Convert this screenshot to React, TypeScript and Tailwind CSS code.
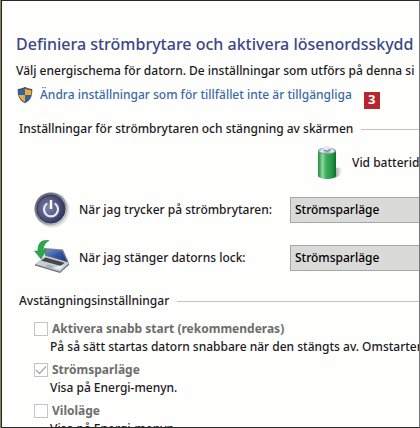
import { useId, type ReactNode } from "react";

const ShieldIcon = () => (
  <svg className="size-[18px] shrink-0" viewBox="0 0 18 18" aria-hidden="true">
    <path
      d="M9 .8c2.200 1.500 4.600 2 7.200 2.200.5 6.400-1.400 11.400-7.200 14.300C3.200 14.400 1.300 9.400 1.800 3 4.400 2.800 6.800 2.300 9 .8z"
      fill="#4b5158"
    />
    <path d="M9 2.400v6.500H2.800c-.2-1.600-.2-3.100-.1-4.700C5 4 7.100 3.500 9 2.400z" fill="#2c65a8" />
    <path d="M9 2.400v6.500h6.200c.2-1.600.2-3.100.1-4.700C13 4 10.900 3.500 9 2.400z" fill="#f0a93a" />
    <path d="M9 8.900v7c-3.700-2-5.500-4.400-6.200-7z" fill="#f0a93a" />
    <path d="M9 8.900v7c3.700-2 5.500-4.400 6.200-7z" fill="#2c65a8" />
  </svg>
);

const BatteryIcon = () => (
  <svg className="h-[36px] w-[28px] shrink-0" viewBox="0 0 28 36" aria-hidden="true">
    <defs>
      <linearGradient id="battery-body">
        <stop offset="0" stopColor="#1d8a3c" />
        <stop offset=".25" stopColor="#8fd6a0" />
        <stop offset=".45" stopColor="#3fae5c" />
        <stop offset=".8" stopColor="#1f9543" />
        <stop offset="1" stopColor="#0d6b2b" />
      </linearGradient>
      <linearGradient id="battery-shadow">
        <stop offset="0" stopColor="#8c8c88" />
        <stop offset="1" stopColor="#fdfdfb" />
      </linearGradient>
    </defs>
    <path d="M18 23c5-1 9 0 8 3-1 4-5 7-9 7z" fill="url(#battery-shadow)" />
    <path d="M2 6v25c1 4 17 4 18 0V6z" fill="url(#battery-body)" />
    <ellipse cx="11" cy="6" rx="8.800" ry="3" fill="#aab4c6" stroke="#5f9b72" strokeWidth=".7" />
    <path d="M3.500 6l4-3V1.800c1-1.200 6-1.200 7 0V3l4 3-3.500 2-4-2-4 2z" fill="#e6eaf2" />
    <path d="M8 4.500l3 1 3-2 1 2.500-4 1-4-1z" fill="#8291ad" />
  </svg>
);

const PowerIcon = () => (
  <svg className="size-[36px] shrink-0" viewBox="0 0 36 36" aria-hidden="true">
    <defs>
      <linearGradient id="power-ring" x2="1" y2="1">
        <stop offset="0" stopColor="#55585e" />
        <stop offset=".5" stopColor="#8d9097" />
        <stop offset="1" stopColor="#d5d6d8" />
      </linearGradient>
      <radialGradient id="power-face" cx=".4" cy=".45" r=".6">
        <stop offset="0" stopColor="#8184a8" />
        <stop offset=".5" stopColor="#5c5f88" />
        <stop offset="1" stopColor="#30345c" />
      </radialGradient>
    </defs>
    <circle cx="18" cy="18" r="17.500" fill="#e3e3e1" />
    <circle cx="17" cy="17" r="16.500" fill="url(#power-ring)" />
    <circle cx="17" cy="17" r="14" fill="url(#power-face)" stroke="#343856" />
    <path
      d="M12.500 12a7 7 0 1 0 9 0"
      fill="none"
      stroke="#e9e9ef"
      strokeWidth="2.200"
      strokeLinecap="round"
    />
    <path d="M17 8v9" stroke="#fff" strokeWidth="2.400" />
  </svg>
);

const LaptopIcon = () => (
  <svg className="size-[36px] shrink-0" viewBox="0 0 36 36" aria-hidden="true">
    <defs>
      <linearGradient id="laptop-screen" x2="1" y2="1">
        <stop offset="0" stopColor="#7592cf" />
        <stop offset=".5" stopColor="#3456a4" />
        <stop offset="1" stopColor="#203775" />
      </linearGradient>
    </defs>
    <path d="M10 8L29 9.500l6 13.500-24-7z" fill="#7b7f86" />
    <path d="M11.500 9.500L28 10.800l5.300 11L12 15z" fill="url(#laptop-screen)" />
    <path d="M11 16l24 7-9 8.500L1 24z" fill="#c9ced2" />
    <path d="M1 24l25 7.500 9-8.500v2l-9 8L1 25.500z" fill="#6d7177" />
    <path d="M11.500 17.500l19 5.300-3.500 3.200-20-5.500z" fill="#44484e" />
    <path d="M14 24.500l6 1.700-3 2-6-1.700z" fill="#9fb0b8" />
    <path d="M24 26.500l6-2-4 5-6-1.500z" fill="#e8f3f5" />
    <path
      d="M15 .5C8-.5 3.500 3 4 11H.500l6.500 8 5.500-9H9.500C9 6 11 3 15 .5z"
      fill="#2ba84a"
      stroke="#1d8438"
      strokeWidth=".5"
    />
  </svg>
);

const SectionTitle = ({ children }: { children: ReactNode }) => (
  <h2 className="flex h-5 items-center gap-2 pl-[3px]">
    {children}
    <span className="h-px flex-1 bg-[#c3c3c1]" />
  </h2>
);

const ActionRow = ({ icon, label }: { icon: ReactNode; label: string }) => {
  const id = useId();

  return (
    <div className="flex h-12 items-center pl-[18px]">
      {icon}
      <label htmlFor={id} className="ml-[9px] w-[211px] shrink-0">
        {label}
      </label>
      <select
        id={id}
        disabled
        className="h-[26px] min-w-[160px] flex-1 appearance-none border border-[#a6a7a5] bg-[#dadbd8] px-1 text-black opacity-100"
      >
        <option>Strömsparläge</option>
      </select>
    </div>
  );
};

const ShutdownOption = ({
  label,
  description,
  checked = false,
}: {
  label: string;
  description: string;
  checked?: boolean;
}) => {
  const id = useId();

  return (
    <div className="h-[41px] pl-[18px]">
      <div className="flex h-5 items-center gap-1">
        <span className="grid size-[14px] shrink-0">
          <input
            id={id}
            type="checkbox"
            disabled
            defaultChecked={checked}
            className="peer col-start-1 row-start-1 size-[14px] appearance-none border border-[#c4c5c3] bg-white"
          />
          <svg
            className="col-start-1 row-start-1 hidden size-[14px] peer-checked:block"
            viewBox="0 0 14 14"
            aria-hidden="true"
          >
            <path d="M2 7l3.500 3.500L12 3.500" fill="none" stroke="#a9aaa8" strokeWidth="1.300" />
          </svg>
        </span>
        <label htmlFor={id} className="font-bold text-[#6c6e6c]">
          {label}
        </label>
      </div>
      <p className="h-4 pl-4 leading-[16px]">{description}</p>
    </div>
  );
};

function App() {
  return (
    <div className="flex h-screen border-l border-[#8c835f] font-['Noto_Sans',sans-serif] text-[12px] font-medium whitespace-nowrap text-[#1c1a1c]">
      <main className="min-w-0 flex-1 overflow-hidden border border-[#2b2728] border-r-[#77777a] bg-[#fefefd] pt-[29px] pl-[14px]">
        <h1 className="h-7 text-[16px] leading-[28px] text-[#3b4787]">
          Definiera strömbrytare och aktivera lösenordsskydd
        </h1>
        <p className="mt-[3px] h-5 leading-[20px]">
          Välj energischema för datorn. De inställningar som utförs på denna si
        </p>
        <div className="mt-[2px] flex h-6 items-center">
          <a href="#unlock" className="flex items-center gap-[6px] text-[#3c69a8]">
            <ShieldIcon />
            Ändra inställningar som för tillfället inte är tillgängliga
          </a>
          <span className="mt-[10px] ml-[12px] flex h-[17px] w-4 items-center justify-center bg-[#b9242f] text-[13px] font-bold text-white">
            3
          </span>
        </div>

        <section className="mt-3">
          <SectionTitle>Inställningar för strömbrytaren och stängning av skärmen</SectionTitle>
          <div className="mt-[6px] mb-[5px] flex h-9 items-center gap-2 pl-[300px]">
            <BatteryIcon />
            <span>Vid batterid</span>
          </div>
          <ActionRow icon={<PowerIcon />} label="När jag trycker på strömbrytaren:" />
          <ActionRow icon={<LaptopIcon />} label="När jag stänger datorns lock:" />
        </section>

        <section className="mt-[9px]">
          <SectionTitle>Avstängningsinställningar</SectionTitle>
          <div className="mt-2">
            <ShutdownOption
              label="Aktivera snabb start (rekommenderas)"
              description="På så sätt startas datorn snabbare när den stängts av. Omstarter"
            />
            <ShutdownOption label="Strömsparläge" description="Visa på Energi-menyn." checked />
            <ShutdownOption label="Viloläge" description="Visa på Energi-menyn." />
          </div>
        </section>
      </main>
    </div>
  );
}

export default App;
